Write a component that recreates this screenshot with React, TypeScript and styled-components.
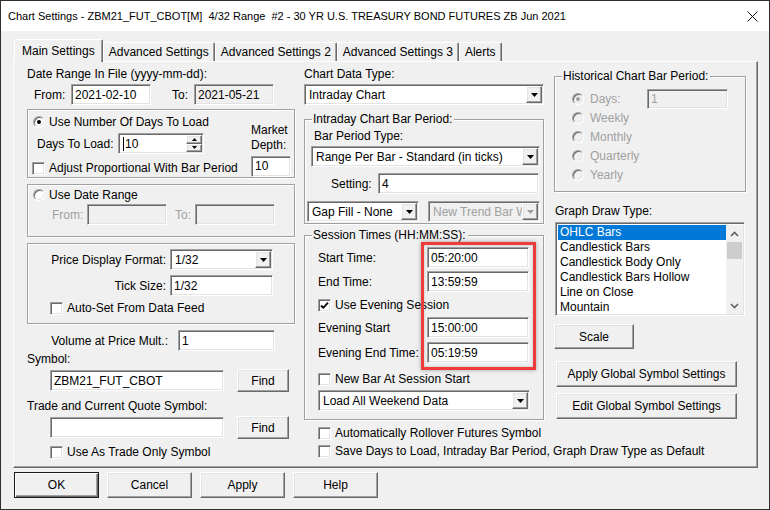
import React from 'react'
import styled, { createGlobalStyle, css } from 'styled-components'

const GlobalStyle = createGlobalStyle`
  html, body {
    margin: 0;
    padding: 0;
    background: #f0f0f0;
  }
  body {
    font-family: "Liberation Sans", Arial, sans-serif;
    font-size: 12px;
    color: #000;
  }
  * {
    box-sizing: border-box;
  }
`

const sunken = css`
  border-style: solid;
  border-width: 1px;
  border-color: #a0a0a0 #ffffff #ffffff #a0a0a0;
  box-shadow: inset 1px 1px 0 #696969, inset -1px -1px 0 #e3e3e3;
`

const raised = css`
  border-style: solid;
  border-width: 1px;
  border-color: #ffffff #696969 #696969 #ffffff;
  box-shadow: inset -1px -1px 0 #a0a0a0, inset 1px 1px 0 #e3e3e3;
`

type Space = { $mt?: number; $ml?: number }

const spacing = css<Space>`
  margin-top: ${p => p.$mt ?? 0}px;
  margin-left: ${p => p.$ml ?? 0}px;
`

const Window = styled.div`
  width: 770px;
  height: 510px;
  border: 1px solid #2f2f2f;
  background: #f0f0f0;
  display: flex;
  flex-direction: column;
  overflow: hidden;
`

const TitleBar = styled.div`
  height: 30px;
  flex-shrink: 0;
  background: #fff;
  display: flex;
  align-items: center;
  justify-content: space-between;
  padding-left: 7px;
  font-size: 11px;
  white-space: pre;
`

const CloseBtn = styled.div`
  width: 34px;
  height: 30px;
  display: flex;
  align-items: center;
  justify-content: center;
`

const Body = styled.div`
  padding: 8px 0 0 12px;
  display: flex;
  flex-direction: column;
`

const TabRow = styled.div`
  height: 22px;
  display: flex;
  align-items: flex-end;
  padding-left: 1px;
`

const Tab = styled.div<{ $active?: boolean }>`
  height: ${p => (p.$active ? 23 : 19)}px;
  margin-bottom: ${p => (p.$active ? -1 : 0)}px;
  padding: 0 ${p => (p.$active ? 7 : 5)}px;
  display: flex;
  align-items: center;
  white-space: nowrap;
  background: #f0f0f0;
  border-style: solid;
  border-width: 1px 1px 0 1px;
  border-color: #fff #696969 #fff #fff;
  border-radius: 2px 2px 0 0;
  box-shadow: inset -1px 0 0 #a0a0a0;
  position: relative;
  z-index: ${p => (p.$active ? 2 : 1)};
`

const Panel = styled.div`
  width: 745px;
  height: 407px;
  border-style: solid;
  border-width: 1px;
  border-color: #fff #696969 #696969 #fff;
  box-shadow: inset -1px -1px 0 #a0a0a0;
  padding: 5px 0 0 13px;
  display: flex;
`

const Column = styled.div<Space & { $w: number }>`
  ${spacing}
  width: ${p => p.$w}px;
  flex-shrink: 0;
  display: flex;
  flex-direction: column;
`

const Row = styled.div<Space & { $h?: number }>`
  ${spacing}
  display: flex;
  align-items: center;
  height: ${p => p.$h ?? 21}px;
  flex-shrink: 0;
`

const Label = styled.div<Space & { $dim?: boolean }>`
  ${spacing}
  line-height: 14px;
  height: 14px;
  white-space: nowrap;
  flex-shrink: 0;
  color: ${p => (p.$dim ? '#a0a0a0' : '#000')};
`

const Cell = styled.div<{ $w: number; $right?: boolean; $pr?: number; $dim?: boolean }>`
  width: ${p => p.$w}px;
  flex-shrink: 0;
  white-space: nowrap;
  text-align: ${p => (p.$right ? 'right' : 'left')};
  padding-right: ${p => p.$pr ?? 0}px;
  color: ${p => (p.$dim ? '#a0a0a0' : '#000')};
`

const Field = styled.div<Space & { $w: number; $h?: number; $off?: boolean; $dim?: boolean }>`
  ${sunken}
  ${spacing}
  width: ${p => p.$w}px;
  height: ${p => p.$h ?? 21}px;
  flex-shrink: 0;
  background: ${p => (p.$off ? '#f0f0f0' : '#fff')};
  color: ${p => (p.$dim ? '#a0a0a0' : '#000')};
  padding: 0 3px;
  display: flex;
  align-items: center;
  white-space: nowrap;
  overflow: hidden;
`

const Caret = styled.span`
  display: inline-block;
  width: 1px;
  height: 14px;
  background: #000;
  margin-right: 1px;
`

const ComboBox = styled.div<Space & { $w: number; $off?: boolean }>`
  ${sunken}
  ${spacing}
  width: ${p => p.$w}px;
  height: 21px;
  flex-shrink: 0;
  padding: 1px;
  display: flex;
  background: ${p => (p.$off ? '#f0f0f0' : '#fff')};
  color: ${p => (p.$off ? '#a0a0a0' : '#000')};
`

const ComboText = styled.div`
  flex: 1;
  padding-left: 3px;
  display: flex;
  align-items: center;
  white-space: nowrap;
  overflow: hidden;
`

const DropBtn = styled.div`
  ${raised}
  width: 16px;
  height: 100%;
  flex-shrink: 0;
  background: #f0f0f0;
  display: flex;
  align-items: center;
  justify-content: center;
`

const SpinBtns = styled.div`
  width: 16px;
  height: 100%;
  flex-shrink: 0;
  display: flex;
  flex-direction: column;
`

const SpinHalf = styled.div`
  ${raised}
  flex: 1;
  background: #f0f0f0;
  display: flex;
  align-items: center;
  justify-content: center;
`

const Button = styled.div<Space & { $w: number; $h?: number; $default?: boolean }>`
  ${raised}
  ${spacing}
  width: ${p => p.$w}px;
  height: ${p => p.$h ?? 23}px;
  flex-shrink: 0;
  background: #f0f0f0;
  display: flex;
  align-items: center;
  justify-content: center;
  white-space: nowrap;
  ${p =>
    p.$default &&
    css`
      outline: 1px solid #1a1a1a;
      outline-offset: -1px;
      border-color: #1a1a1a;
      box-shadow: inset 1px 1px 0 #fff, inset -1px -1px 0 #696969, inset -2px -2px 0 #a0a0a0;
    `}
`

const Group = styled.div<Space & { $w: number; $h: number; $pad: string }>`
  ${spacing}
  position: relative;
  width: ${p => p.$w}px;
  height: ${p => p.$h}px;
  flex-shrink: 0;
  border: 1px solid #a0a0a0;
  box-shadow: inset 1px 1px 0 #fff, 1px 1px 0 #fff;
  padding: ${p => p.$pad};
  display: flex;
  flex-direction: column;
`

const Caption = styled.div`
  position: absolute;
  top: -8px;
  left: 7px;
  padding: 0 2px 0 1px;
  line-height: 14px;
  background: #f0f0f0;
  white-space: nowrap;
`

const Highlight = styled.div`
  position: absolute;
  left: 116px;
  top: 6px;
  width: 115px;
  height: 128px;
  border: 3px solid #ee3b3b;
  box-shadow: 0 0 4px rgba(0, 0, 0, 0.35), inset 0 0 3px rgba(0, 0, 0, 0.2);
  pointer-events: none;
`

const Tick = styled.div<Space & { $h?: number }>`
  ${spacing}
  height: ${p => p.$h ?? 14}px;
  display: flex;
  align-items: center;
  white-space: nowrap;
  flex-shrink: 0;
`

const CheckBox = styled.div`
  ${sunken}
  width: 13px;
  height: 13px;
  background: #fff;
  margin-right: 4px;
  flex-shrink: 0;
  display: flex;
  align-items: center;
  justify-content: center;
`

const RadioDot = styled.div<{ $off?: boolean; $gap?: number }>`
  width: 12px;
  height: 12px;
  border-radius: 50%;
  border: 1px solid;
  border-color: #a0a0a0 #fff #fff #a0a0a0;
  box-shadow: inset 1px 1px 0 #696969, inset -1px -1px 0 #e3e3e3;
  background: ${p => (p.$off ? '#f0f0f0' : '#fff')};
  margin-right: ${p => p.$gap ?? 4}px;
  flex-shrink: 0;
  display: flex;
  align-items: center;
  justify-content: center;
`

const Pip = styled.div<{ $off?: boolean }>`
  width: 4px;
  height: 4px;
  border-radius: 50%;
  background: ${p => (p.$off ? '#a0a0a0' : '#000')};
`

const ListBox = styled.div<Space>`
  ${sunken}
  ${spacing}
  width: 190px;
  height: 94px;
  background: #fff;
  padding: 2px 1px 1px 2px;
  display: flex;
  flex-shrink: 0;
`

const ListItems = styled.div`
  flex: 1;
  display: flex;
  flex-direction: column;
`

const ListItem = styled.div<{ $sel?: boolean }>`
  height: 15px;
  line-height: 15px;
  padding-left: 2px;
  white-space: nowrap;
  background: ${p => (p.$sel ? '#0078d7' : 'transparent')};
  color: ${p => (p.$sel ? '#fff' : '#000')};
`

const ScrollBar = styled.div`
  width: 17px;
  background: #f0f0f0;
  display: flex;
  flex-direction: column;
  align-items: center;
`

const ScrollArrow = styled.div`
  height: 17px;
  width: 17px;
  display: flex;
  align-items: center;
  justify-content: center;
`

const Thumb = styled.div`
  width: 15px;
  height: 17px;
  background: #cdcdcd;
`

const Footer = styled.div`
  display: flex;
  gap: 8px;
  margin-top: 4px;
  padding-left: 1px;
`

const Arrow = ({ off }: { off?: boolean }) => (
  <svg width="7" height="4" viewBox="0 0 7 4">
    <path d="M0 0h7L3.5 4z" fill={off ? '#a0a0a0' : '#000'} />
  </svg>
)

const SmallArrow = ({ up }: { up?: boolean }) => (
  <svg width="5" height="3" viewBox="0 0 5 3">
    <path d={up ? 'M0 3h5L2.5 0z' : 'M0 0h5L2.5 3z'} fill="#000" />
  </svg>
)

const Chevron = ({ up }: { up?: boolean }) => (
  <svg width="9" height="6" viewBox="0 0 9 6">
    <path d={up ? 'M1 5l3.5-3.5L8 5' : 'M1 1l3.5 3.5L8 1'} stroke="#606060" strokeWidth="1.6" fill="none" />
  </svg>
)

const Combo = ({ w, value, off, mt, ml }: { w: number; value: string; off?: boolean; mt?: number; ml?: number }) => (
  <ComboBox $w={w} $off={off} $mt={mt} $ml={ml}>
    <ComboText>{value}</ComboText>
    <DropBtn>
      <Arrow off={off} />
    </DropBtn>
  </ComboBox>
)

const Check = ({ text, checked, mt, ml }: { text: string; checked?: boolean; mt?: number; ml?: number }) => (
  <Tick $mt={mt} $ml={ml}>
    <CheckBox>
      {checked && (
        <svg width="9" height="9" viewBox="0 0 9 9">
          <path d="M1 4.5l2.3 2.3L8 1.6" stroke="#000" strokeWidth="1.8" fill="none" />
        </svg>
      )}
    </CheckBox>
    {text}
  </Tick>
)

const Radio = ({ text, on, off, gap }: { text: string; on?: boolean; off?: boolean; gap?: number }) => (
  <>
    <RadioDot $off={off} $gap={gap}>
      {on && <Pip $off={off} />}
    </RadioDot>
    <Label $dim={off}>{text}</Label>
  </>
)

const drawTypes = ['OHLC Bars', 'Candlestick Bars', 'Candlestick Body Only', 'Candlestick Bars Hollow', 'Line on Close', 'Mountain']
const periods = ['Weekly', 'Monthly', 'Quarterly', 'Yearly']

export default function App() {
  return (
    <>
      <GlobalStyle />
      <Window>
        <TitleBar>
          <span>Chart Settings - ZBM21_FUT_CBOT[M]  4/32 Range  #2 - 30 YR U.S. TREASURY BOND FUTURES ZB Jun 2021</span>
          <CloseBtn>
            <svg width="11" height="11" viewBox="0 0 11 11">
              <path d="M0.5 0.5l10 10M10.5 0.5l-10 10" stroke="#111" strokeWidth="1" />
            </svg>
          </CloseBtn>
        </TitleBar>
        <Body>
          <TabRow>
            <Tab $active>Main Settings</Tab>
            <Tab>Advanced Settings</Tab>
            <Tab>Advanced Settings 2</Tab>
            <Tab>Advanced Settings 3</Tab>
            <Tab>Alerts</Tab>
          </TabRow>
          <Panel>
            {/* left column */}
            <Column $w={268}>
              <Label>Date Range In File (yyyy-mm-dd):</Label>
              <Row $mt={3} $ml={7}>
                <Cell $w={37}>From:</Cell>
                <Field $w={80}>2021-02-10</Field>
                <Cell $w={22} style={{ marginLeft: 21 }}>To:</Cell>
                <Field $w={80} $off>2021-05-21</Field>
              </Row>

              <Group $w={268} $h={69} $mt={4} $pad="5px 3px 0 5px">
                <Row $h={62} style={{ alignItems: 'flex-start' }}>
                  <Column $w={200}>
                    <Row $h={14}>
                      <Radio text="Use Number Of Days To Load" on />
                    </Row>
                    <Row $mt={4} $ml={4}>
                      <Cell $w={81}>Days To Load:</Cell>
                      <ComboBox $w={86}>
                        <ComboText>
                          <Caret />
                          10
                        </ComboText>
                        <SpinBtns>
                          <SpinHalf>
                            <SmallArrow up />
                          </SpinHalf>
                          <SpinHalf>
                            <SmallArrow />
                          </SpinHalf>
                        </SpinBtns>
                      </ComboBox>
                    </Row>
                    <Check text="Adjust Proportional With Bar Period" ml={-1} mt={7} />
                  </Column>
                  <Column $w={40} $mt={8} style={{ marginLeft: 'auto', lineHeight: '15px' }}>
                    <div>Market</div>
                    <div>Depth:</div>
                    <Field $w={40} $mt={3}>10</Field>
                  </Column>
                </Row>
              </Group>

              <Group $w={268} $h={53} $mt={6} $pad="3px 0 0 5px">
                <Row $h={14}>
                  <Radio text="Use Date Range" />
                </Row>
                <Row $mt={2} $ml={19}>
                  <Cell $w={35} $dim>From:</Cell>
                  <Field $w={80} $off />
                  <Cell $w={20} $dim style={{ marginLeft: 8 }}>To:</Cell>
                  <Field $w={80} $off />
                </Row>
              </Group>

              <Group $w={268} $h={81} $mt={6} $pad="5px 0 0 0">
                <Row>
                  <Cell $w={142} $right $pr={4}>Price Display Format:</Cell>
                  <Combo w={103} value="1/32" />
                </Row>
                <Row $mt={5}>
                  <Cell $w={142} $right $pr={4}>Tick Size:</Cell>
                  <Field $w={103}>1/32</Field>
                </Row>
                <Check text="Auto-Set From Data Feed" mt={5} ml={22} />
              </Group>

              <Row $mt={6}>
                <Cell $w={151} $right $pr={10}>Volume at Price Mult.:</Cell>
                <Field $w={97}>1</Field>
              </Row>
              <Label $mt={1}>Symbol:</Label>
              <Row $mt={3} $ml={23} $h={23}>
                <Field $w={174}>ZBM21_FUT_CBOT</Field>
                <Button $w={52} $ml={13}>Find</Button>
              </Row>
              <Label $mt={7}>Trade and Current Quote Symbol:</Label>
              <Row $mt={3} $ml={23} $h={23}>
                <Field $w={174} />
                <Button $w={52} $ml={13}>Find</Button>
              </Row>
              <Check text="Use As Trade Only Symbol" mt={6} ml={23} />
            </Column>

            {/* middle column */}
            <Column $w={240} $ml={9}>
              <Label>Chart Data Type:</Label>
              <Combo w={240} value="Intraday Chart" mt={3} />

              <Group $w={240} $h={105} $mt={14} $pad="9px 3px 0 9px">
                <Caption>Intraday Chart Bar Period:</Caption>
                <Label>Bar Period Type:</Label>
                <Combo w={229} value="Range Per Bar - Standard (in ticks)" mt={3} ml={-3} />
                <Row $mt={6} $ml={17}>
                  <Cell $w={47}>Setting:</Cell>
                  <Field $w={161}>4</Field>
                </Row>
                <Row $mt={7} $ml={-7}>
                  <Combo w={112} value="Gap Fill - None" />
                  <Combo w={112} value="New Trend Bar When" off ml={9} />
                </Row>
              </Group>

              <Group $w={240} $h={185} $mt={11} $pad="11px 0 0 13px">
                <Caption>Session Times (HH:MM:SS):</Caption>
                <Row>
                  <Cell $w={109}>Start Time:</Cell>
                  <Field $w={102}>05:20:00</Field>
                </Row>
                <Row $mt={3}>
                  <Cell $w={109}>End Time:</Cell>
                  <Field $w={102}>13:59:59</Field>
                </Row>
                <Check text="Use Evening Session" checked mt={6} />
                <Row $mt={5}>
                  <Cell $w={109}>Evening Start</Cell>
                  <Field $w={102}>15:00:00</Field>
                </Row>
                <Row $mt={4}>
                  <Cell $w={109}>Evening End Time:</Cell>
                  <Field $w={102}>05:19:59</Field>
                </Row>
                <Check text="New Bar At Session Start" mt={9} />
                <Combo w={212} value="Load All Weekend Data" mt={4} />
                <Highlight />
              </Group>

              <Check text="Automatically Rollover Futures Symbol" mt={6} ml={14} />
              <Check text="Save Days to Load, Intraday Bar Period, Graph Draw Type as Default" mt={4} ml={14} />
            </Column>

            {/* right column */}
            <Column $w={192} $ml={10}>
              <Group $w={192} $h={116} $mt={9} $pad="13px 0 0 17px">
                <Caption>Historical Chart Bar Period:</Caption>
                <Row $h={18}>
                  <RadioDot $off $gap={6}>
                    <Pip $off />
                  </RadioDot>
                  <Cell $w={57} $dim>Days:</Cell>
                  <Field $w={81} $h={20} $off $dim>1</Field>
                </Row>
                {periods.map(p => (
                  <Row key={p} $h={19}>
                    <Radio text={p} off gap={6} />
                  </Row>
                ))}
              </Group>
              <Label $mt={12} $ml={1}>Graph Draw Type:</Label>
              <ListBox $mt={4} $ml={1}>
                <ListItems>
                  {drawTypes.map((t, i) => (
                    <ListItem key={t} $sel={i === 0}>{t}</ListItem>
                  ))}
                </ListItems>
                <ScrollBar>
                  <ScrollArrow>
                    <Chevron up />
                  </ScrollArrow>
                  <Thumb />
                  <div style={{ flex: 1 }} />
                  <ScrollArrow>
                    <Chevron />
                  </ScrollArrow>
                </ScrollBar>
              </ListBox>
              <Button $w={80} $h={25} $mt={8}>Scale</Button>
              <Button $w={181} $h={26} $mt={12} $ml={2}>Apply Global Symbol Settings</Button>
              <Button $w={181} $h={26} $mt={6} $ml={2}>Edit Global Symbol Settings</Button>
            </Column>
          </Panel>
          <Footer>
            <Button $w={85} $h={26} $default>OK</Button>
            <Button $w={85} $h={26}>Cancel</Button>
            <Button $w={85} $h={26}>Apply</Button>
            <Button $w={85} $h={26}>Help</Button>
          </Footer>
        </Body>
      </Window>
    </>
  )
}
